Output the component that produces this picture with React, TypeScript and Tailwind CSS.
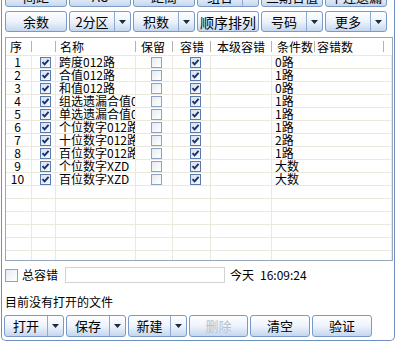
import type { ReactNode } from 'react';

type Row = { name: string; cond: string };

const ROWS: Row[] = [
  { name: '跨度012路', cond: '0路' },
  { name: '合值012路', cond: '1路' },
  { name: '和值012路', cond: '0路' },
  { name: '组选遗漏合值012路', cond: '1路' },
  { name: '单选遗漏合值012路', cond: '1路' },
  { name: '个位数字012路', cond: '1路' },
  { name: '十位数字012路', cond: '2路' },
  { name: '百位数字012路', cond: '1路' },
  { name: '个位数字XZD', cond: '大数' },
  { name: '百位数字XZD', cond: '大数' },
];

const COLS = 'grid grid-cols-[26px_24px_80px_37px_38px_61px_43px_69px_1fr]';

function Arrow() {
  return (
    <svg width="7" height="4" viewBox="0 0 7 4" className="block">
      <path d="M0 0 H7 L3.5 4 Z" fill="#1a2a44" />
    </svg>
  );
}

function Btn({
  label,
  split,
  disabled,
  className = '',
}: {
  label: string;
  split?: boolean;
  disabled?: boolean;
  className?: string;
}) {
  return (
    <div
      className={`flex h-full shrink-0 rounded-[3px] border border-[#7b9bc6] bg-gradient-to-b from-[#fdfeff] via-[#eef3fb] to-[#c4d7ef] ${className}`}
    >
      <div
        className={`flex flex-1 items-center justify-center whitespace-nowrap leading-[14px] ${
          disabled ? 'text-[#b3c2d6]' : 'text-black'
        }`}
      >
        {label}
      </div>
      {split && (
        <div className="flex w-[16px] items-center justify-center border-l border-[#8eaad0]">
          <Arrow />
        </div>
      )}
    </div>
  );
}

function Check({ on, big }: { on?: boolean; big?: boolean }) {
  const size = big ? 'w-[13px] h-[13px]' : 'w-[11px] h-[11px]';
  return (
    <div
      className={`${size} flex shrink-0 items-center justify-center border ${
        on
          ? 'border-[#5a78a8] bg-gradient-to-br from-[#d6e0ee] to-[#f7f9fc]'
          : 'border-[#8ea3c2] bg-gradient-to-br from-[#e6ebf2] to-white'
      }`}
    >
      {on && (
        <svg width="9" height="9" viewBox="0 0 9 9">
          <path d="M1.5 4.2 L3.6 6.4 L7.6 1.8" stroke="#1b2f6e" strokeWidth="1.9" fill="none" />
        </svg>
      )}
    </div>
  );
}

function Head({ children, pl = 'pl-[5px]', last }: { children?: ReactNode; pl?: string; last?: boolean }) {
  return (
    <div className={`flex items-center justify-between whitespace-nowrap leading-[14px] ${pl}`}>
      <span>{children}</span>
      {!last && <span className="h-[11px] w-px bg-[#b7b4a6]" />}
    </div>
  );
}

const cell = 'border-r border-b border-[#ebe9dd] h-[13px] leading-[12px] flex items-center overflow-hidden';

export default function App() {
  return (
    <div className="h-[348px] w-[397px] overflow-hidden bg-white font-['Noto_Sans_CJK_SC',sans-serif] text-[12px] text-black">
      <div className="ml-[1px] flex w-[394px] flex-col rounded-b-[5px] border-x border-b border-[#6f8fc2] pl-[3px] pb-[3px]">
        {/* cut-off toolbar row */}
        <div className="mt-[-14px] flex h-[21px] gap-[2px] text-[13px]">
          <Btn label="间距" className="w-[62px]" />
          <Btn label="AC" className="w-[62px]" />
          <Btn label="距离" className="w-[62px]" />
          <Btn label="组合" split className="w-[62px]" />
          <Btn label="三期合值" className="w-[62px]" />
          <Btn label="不连遗漏" className="w-[62px]" />
        </div>

        <div className="mt-[4px] flex h-[21px] gap-[2px] text-[13px]">
          <Btn label="余数" className="w-[62px]" />
          <Btn label="2分区" split className="w-[62px]" />
          <Btn label="积数" split className="w-[62px]" />
          <Btn label="顺序排列" className="w-[62px] text-[14px]" />
          <Btn label="号码" split className="w-[62px]" />
          <Btn label="更多" split className="w-[62px]" />
        </div>

        {/* list */}
        <div className="mt-[5px] h-[224px] w-[388px] overflow-hidden border border-[#97a6ba]">
          <div className={`${COLS} h-[18px] border-b border-[#ebe9dd]`}>
            <Head pl="pl-[4px]">序</Head>
            <Head />
            <Head pl="pl-[4px]">名称</Head>
            <Head>保留</Head>
            <Head pl="pl-[7px]">容错</Head>
            <Head pl="pl-[6px]">本级容错</Head>
            <Head pl="pl-[5px]">条件数</Head>
            <Head pl="pl-[2px]">容错数</Head>
            <Head last />
          </div>
          <div className={COLS}>
            {ROWS.map((r, i) => (
              <div key={i} className="contents">
                <div className={`${cell} justify-center pr-[2px]`}>{i + 1}</div>
                <div className={`${cell} justify-center pl-[3px]`}>
                  <Check on />
                </div>
                <div className={`${cell} whitespace-nowrap pl-[3px]`}>{r.name}</div>
                <div className={`${cell} justify-center pl-[4px]`}>
                  <Check />
                </div>
                <div className={`${cell} justify-center pl-[8px]`}>
                  <Check on />
                </div>
                <div className={cell} />
                <div className={`${cell} col-span-3 pl-[3px]`}>{r.cond}</div>
              </div>
            ))}
            {[0, 1, 2, 3, 4, 5].map((k) => (
              <div key={`e${k}`} className="contents">
                <div className={cell} />
                <div className={cell} />
                <div className={cell} />
                <div className={cell} />
                <div className={cell} />
                <div className={cell} />
                <div className={`${cell} col-span-3`} />
              </div>
            ))}
          </div>
        </div>

        <div className="mt-[6px] flex h-[16px] items-center">
          <Check big />
          <span className="ml-[4px] w-[43px]">总容错</span>
          <div className="h-[16px] w-[160px] border border-[#cfd2d6] bg-white" />
          <span className="ml-[5px]">今天</span>
          <span className="ml-[6px]">16:09:24</span>
        </div>

        <div className="mt-[12px] h-[14px] leading-[14px]">目前没有打开的文件</div>

        <div className="ml-[-1px] mt-[6px] flex h-[22px] gap-[2px] text-[13px]">
          <Btn label="打开" split className="w-[60px]" />
          <Btn label="保存" split className="w-[60px]" />
          <Btn label="新建" split className="w-[59px]" />
          <Btn label="删除" disabled className="w-[59px]" />
          <Btn label="清空" className="w-[60px]" />
          <Btn label="验证" className="w-[60px]" />
        </div>
      </div>
    </div>
  );
}
